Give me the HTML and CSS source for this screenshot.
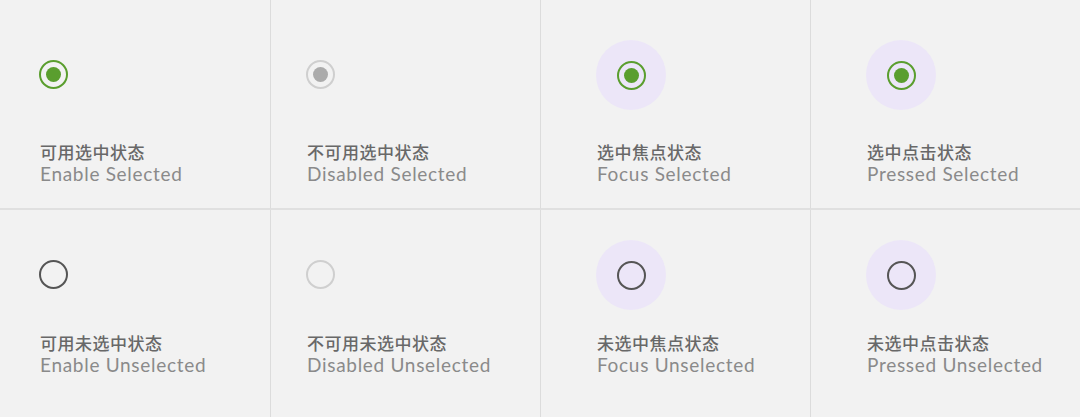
FILE: index.html
```html
<!DOCTYPE html>
<html lang="zh">
<head>
<meta charset="utf-8">
<title>Radio states</title>
<link rel="stylesheet" href="styles.css">
</head>
<body>
<div class="grid">
  <div class="cell row1 c1">
    <div class="icon-box"><span class="radio on"></span></div>
    <div class="label"><div class="zh">可用选中状态</div><div class="en">Enable Selected</div></div>
  </div>
  <div class="cell row1 c2">
    <div class="icon-box"><span class="radio on disabled"></span></div>
    <div class="label"><div class="zh">不可用选中状态</div><div class="en">Disabled Selected</div></div>
  </div>
  <div class="cell row1 c3">
    <div class="icon-box halo"><span class="radio on"></span></div>
    <div class="label"><div class="zh">选中焦点状态</div><div class="en">Focus Selected</div></div>
  </div>
  <div class="cell row1 c4">
    <div class="icon-box halo"><span class="radio on"></span></div>
    <div class="label"><div class="zh">选中点击状态</div><div class="en">Pressed Selected</div></div>
  </div>
  <div class="cell row2 c1">
    <div class="icon-box"><span class="radio"></span></div>
    <div class="label"><div class="zh">可用未选中状态</div><div class="en">Enable Unselected</div></div>
  </div>
  <div class="cell row2 c2">
    <div class="icon-box"><span class="radio disabled"></span></div>
    <div class="label"><div class="zh">不可用未选中状态</div><div class="en">Disabled Unselected</div></div>
  </div>
  <div class="cell row2 c3">
    <div class="icon-box halo"><span class="radio"></span></div>
    <div class="label"><div class="zh">未选中焦点状态</div><div class="en">Focus Unselected</div></div>
  </div>
  <div class="cell row2 c4">
    <div class="icon-box halo"><span class="radio"></span></div>
    <div class="label"><div class="zh">未选中点击状态</div><div class="en">Pressed Unselected</div></div>
  </div>
</div>
</body>
</html>
```
FILE: styles.css
```css
* { box-sizing: border-box; }
html, body {
  margin: 0;
  padding: 0;
  background: #f2f2f2;
}
body {
  width: 1080px;
  height: 417px;
  overflow: hidden;
  font-family: "Lato", "Noto Sans CJK SC", sans-serif;
}
.grid {
  display: grid;
  grid-template-columns: 271px 270px 270px 1fr;
  grid-template-rows: 210px 207px;
}
.cell {
  display: flex;
  flex-direction: column;
  align-items: flex-start;
}
.c1, .c2, .c3 { border-right: 1px solid #dcdcdc; }
.row1 { border-bottom: 2px solid #e0e0e0; padding-top: 40px; }
.row2 { padding-top: 30px; }
.c1 { padding-left: 39px; }
.c2 { padding-left: 35px; }
.c3, .c4 { padding-left: 55px; }

.icon-box {
  width: 70px;
  height: 69px;
  display: flex;
  align-items: center;
  justify-content: flex-start;
}
.icon-box.halo {
  justify-content: center;
  width: 70px;
  height: 70px;
  border-radius: 50%;
  background: #ece6f8;
}
.radio {
  width: 29px;
  height: 29px;
  border-radius: 50%;
  border: 2px solid #555555;
  display: flex;
  align-items: center;
  justify-content: center;
}
.radio.on { border-color: #5a9e2e; }
.radio.on::after {
  content: "";
  width: 15px;
  height: 15px;
  border-radius: 50%;
  background: #5a9e2e;
}
.radio.disabled { border-color: #cfcfcf; }
.radio.on.disabled::after { background: #ababab; }

.label { padding-left: 1px; }
.row1 .label { margin-top: 32px; }
.row1 .icon-box.halo + .label { margin-top: 31px; }
.row2 .label { margin-top: 23px; }
.row2 .icon-box.halo + .label { margin-top: 22px; }
.zh {
  font-family: "Noto Sans CJK SC", sans-serif;
  font-size: 17px;
  font-weight: 500;
  line-height: 22px;
  color: #686868;
  letter-spacing: 0.5px;
}
.en {
  font-family: "Lato", sans-serif;
  font-size: 19px;
  line-height: 22px;
  color: #8a8a8a;
  letter-spacing: 0.7px;
}
```
